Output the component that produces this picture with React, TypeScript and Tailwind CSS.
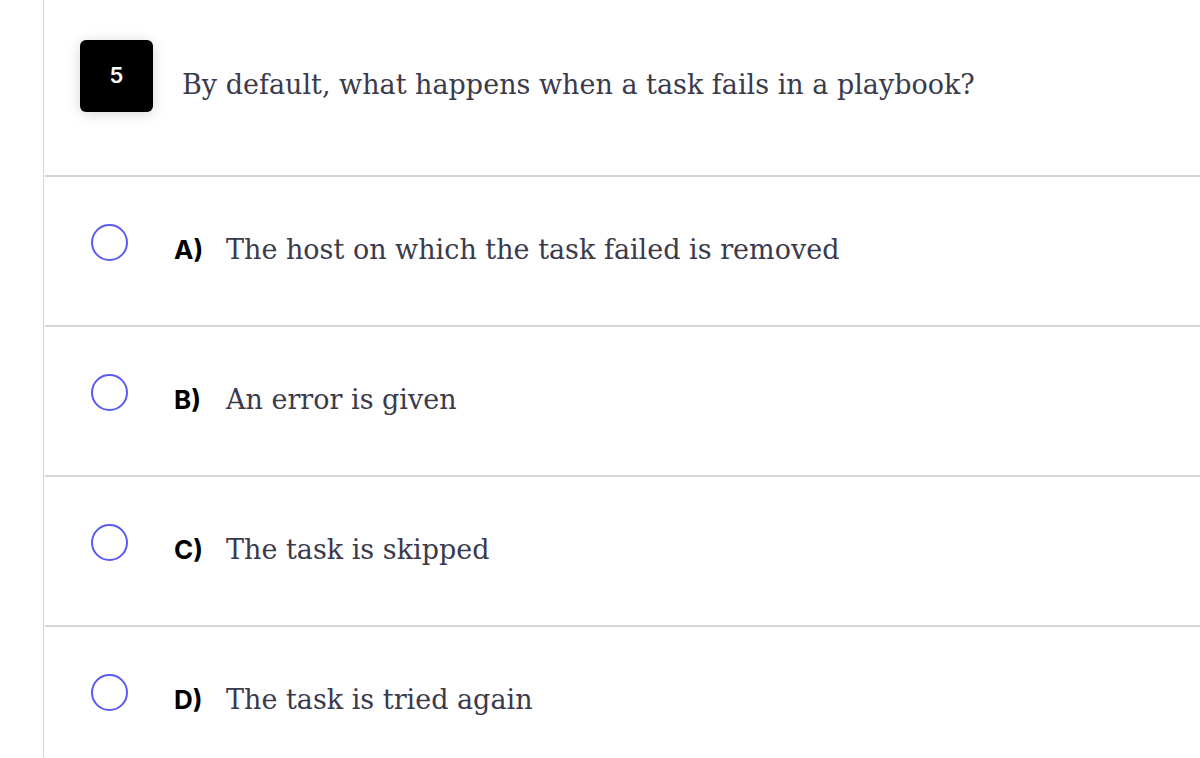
const options = [
  { key: 'A)', text: 'The host on which the task failed is removed' },
  { key: 'B)', text: 'An error is given' },
  { key: 'C)', text: 'The task is skipped' },
  { key: 'D)', text: 'The task is tried again' },
]

export default function App() {
  return (
    <div className="min-h-[758px] bg-white">
      <div className="ml-[43px] min-h-[758px] border-l border-[#d4d4d4]">
        {/* question header */}
        <div className="flex h-[175px] items-start pl-[36px] pt-[40px]">
          <div className="flex h-[72px] w-[73px] shrink-0 items-center justify-center rounded-md bg-black shadow-[0_2px_14px_rgba(0,0,0,0.16)]">
            <span className="pb-[2px] font-['Inter',sans-serif] text-[22px] font-semibold text-white">5</span>
          </div>
          <p className="ml-[29px] mt-[27px] font-['DejaVu_Serif',serif] text-[27px] leading-[36px] text-[#3a3a4c]">
            By default, what happens when a task fails in a playbook?
          </p>
        </div>

        {/* answer rows */}
        {options.map((o) => (
          <div key={o.key} className="ml-px flex h-[150px] items-start border-t-2 border-[#d4d4d8] pl-[46px] pt-[47px]">
            <span className="h-[37px] w-[37px] shrink-0 rounded-full border-2 border-[#5b5bf3]" />
            <span className="ml-[46px] mt-[10px] w-[52px] font-['Inter',sans-serif] text-[26px] font-bold leading-[32px] text-black">
              {o.key}
            </span>
            <span className="mt-[9px] font-['DejaVu_Serif',serif] text-[27px] leading-[34px] text-[#3a3a4c]">
              {o.text}
            </span>
          </div>
        ))}
      </div>
    </div>
  )
}
